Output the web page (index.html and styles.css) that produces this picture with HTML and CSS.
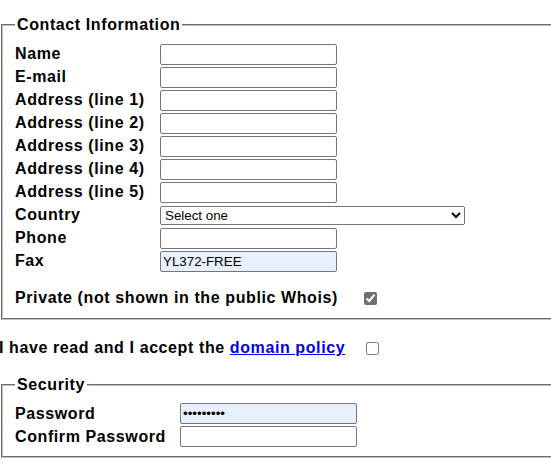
FILE: index.html
```html
<!DOCTYPE html>
<html>
<head>
<meta charset="utf-8">
<link rel="stylesheet" href="styles.css">
</head>
<body>
<div class="page">
  <fieldset class="box">
    <legend>Contact Information</legend>
    <div class="grid contact">
      <label>Name</label><input type="text" class="field">
      <label>E-mail</label><input type="text" class="field">
      <label>Address (line 1)</label><input type="text" class="field">
      <label>Address (line 2)</label><input type="text" class="field">
      <label>Address (line 3)</label><input type="text" class="field">
      <label>Address (line 4)</label><input type="text" class="field">
      <label>Address (line 5)</label><input type="text" class="field">
      <label>Country</label><select class="country"><option>Select one</option></select>
      <label>Phone</label><input type="text" class="field">
      <label>Fax</label><input type="text" class="field filled" value="YL372-FREE">
    </div>
    <div class="private">
      <span>Private (not shown in the public Whois)</span>
      <input type="checkbox" class="check checked" checked>
    </div>
  </fieldset>
  <p class="accept">
    <span>I have read and I accept the <a href="#">domain policy</a></span>
    <input type="checkbox" class="check">
  </p>
  <fieldset class="box security-box">
    <legend>Security</legend>
    <div class="grid security">
      <label>Password</label><input type="password" class="field filled" value="abcdefghi">
      <label>Confirm Password</label><input type="password" class="field">
    </div>
  </fieldset>
</div>
</body>
</html>
```
FILE: styles.css
```css
html, body {
  margin: 0;
  overflow: hidden;
  background: #fff;
}
body {
  font-family: "Liberation Sans", Arial, sans-serif;
  font-size: 16px;
  font-weight: bold;
  color: #000;
  letter-spacing: 0.6px;
}
.page {
  margin-left: -1px;
  padding-top: 16px;
  width: 700px;
}
.box {
  margin: 0 2px;
  padding: 5.6px 12px 10px;
  border: 2px groove rgb(192, 192, 192);
}
.security-box {
  padding-bottom: 9px;
}
.box legend {
  padding: 0 2px;
  font-weight: bold;
  font-size: 16px;
}
.grid {
  display: grid;
  grid-auto-rows: 21px;
  row-gap: 2px;
  align-items: center;
  justify-items: start;
  margin-top: 4px;
}
.contact { grid-template-columns: 145px auto; }
.security { grid-template-columns: 165px auto; }
.field {
  box-sizing: border-box;
  width: 177px;
  height: 21px;
  margin: 0;
  padding: 1px 2px;
  border: 1px solid #767676;
  border-radius: 2px;
  background-color: #fff;
  font-family: "Liberation Sans", Arial, sans-serif;
  font-size: 13.333px;
  font-weight: normal;
  letter-spacing: 0;
}
.filled {
  background-color: #e8f0fe;
}
.country {
  box-sizing: border-box;
  width: 305px;
  height: 19px;
  margin: 0;
  font-family: "Liberation Sans", Arial, sans-serif;
  font-size: 13.333px;
  font-weight: normal;
  letter-spacing: 0;
}
.private {
  display: flex;
  align-items: center;
  margin-top: 17px;
}
.private .check {
  margin-left: 26px;
}
.check {
  width: 13px;
  height: 13px;
  margin: 3px 3px 3px 4px;
}
.checked {
  accent-color: #6f6f6f;
}
.accept {
  display: flex;
  align-items: center;
  margin: 19px 0 18px;
}
.accept .check {
  margin-left: 21px;
}
.accept a {
  color: #0000ee;
  text-decoration: underline;
}
```
